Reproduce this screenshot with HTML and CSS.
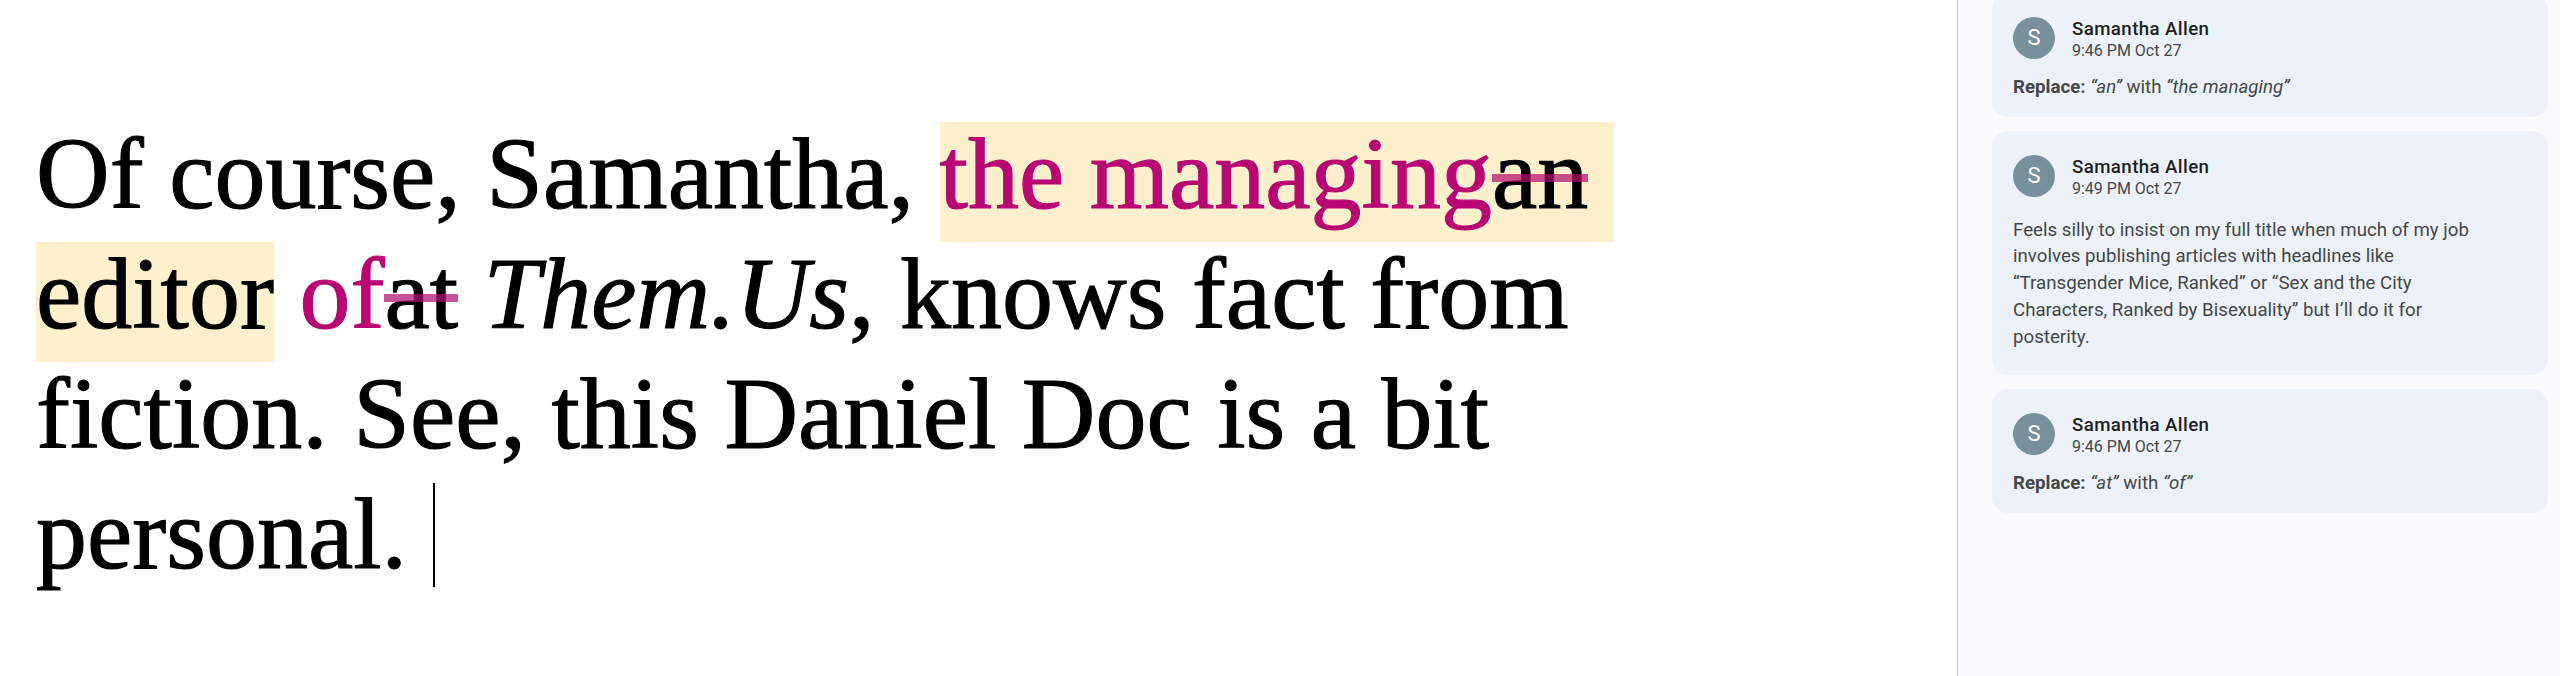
FILE: index.html
```html
<!DOCTYPE html>
<html lang="en">
<head>
<meta charset="utf-8">
<title>Doc with suggestions</title>
<link rel="stylesheet" href="styles.css">
</head>
<body>
<div class="app">
  <main class="doc">
    <p class="doc-text">Of course, Samantha, <span class="hl"><span class="ins">the managing</span><span class="del">an</span>&nbsp;</span><br><span class="hl">editor</span> <span class="ins">of</span><span class="del">at</span> <em>Them.Us</em>, knows fact from<br>fiction. See, this Daniel Doc is a bit<br>personal. <span class="caret"></span></p>
  </main>
  <aside class="sidebar">
    <div class="threads">
      <div class="card">
        <div class="card-head">
          <div class="avatar">S</div>
          <div class="who">
            <div class="name">Samantha Allen</div>
            <div class="time">9:46 PM Oct 27</div>
          </div>
        </div>
        <div class="replace"><b>Replace:</b> <i>“an”</i> with <i>“the managing”</i></div>
      </div>
      <div class="card">
        <div class="card-head">
          <div class="avatar">S</div>
          <div class="who">
            <div class="name">Samantha Allen</div>
            <div class="time">9:49 PM Oct 27</div>
          </div>
        </div>
        <div class="comment">Feels silly to insist on my full title when much of my job<br>involves publishing articles with headlines like<br>“Transgender Mice, Ranked” or “Sex and the City<br>Characters, Ranked by Bisexuality” but I’ll do it for<br>posterity.</div>
      </div>
      <div class="card">
        <div class="card-head">
          <div class="avatar">S</div>
          <div class="who">
            <div class="name">Samantha Allen</div>
            <div class="time">9:46 PM Oct 27</div>
          </div>
        </div>
        <div class="replace"><b>Replace:</b> <i>“at”</i> with <i>“of”</i></div>
      </div>
    </div>
  </aside>
</div>
</body>
</html>
```

FILE: styles.css
```css
* { box-sizing: border-box; }

html, body {
  margin: 0;
  padding: 0;
  background: #ffffff;
}

body {
  width: 2560px;
  height: 676px;
  overflow: hidden;
}

.app {
  display: flex;
  height: 676px;
}

.doc {
  flex: 1;
  background: #ffffff;
  padding: 114px 0 0 36px;
}

.doc-text {
  margin: 0;
  font-family: "Liberation Serif", "Times New Roman", serif;
  font-size: 102px;
  line-height: 120px;
  color: #000000;
  white-space: nowrap;
  -webkit-text-stroke: 1.1px currentColor;
}

.doc-text em {
  font-style: italic;
}

.hl {
  padding-bottom: 12px;
  background: linear-gradient(to bottom, transparent 0, transparent 5px, #fdf0cd 5px, #fdf0cd 100%);
}

.ins {
  color: #b80672;
}

.del {
  position: relative;
  color: #000000;
}

.del::after {
  content: "";
  position: absolute;
  left: 0;
  right: 0;
  top: 57px;
  height: 8px;
  background: rgba(176, 10, 108, 0.7);
}

.caret {
  display: inline-block;
  width: 0;
  height: 104px;
  border-left: 2px solid #000000;
  vertical-align: -19px;
}

.sidebar {
  width: 603px;
  flex: none;
  background: #f8fafd;
  border-left: 1px solid #c6c6c6;
  padding: 0 12px 0 34px;
  font-family: Roboto, "Noto Sans", sans-serif;
}

.threads {
  display: flex;
  flex-direction: column;
  gap: 14px;
  margin-top: -7px;
}

.card {
  background: #edf2fa;
  border-radius: 16px;
  padding: 24px 21px 16px 21px;
}

.card-head {
  display: flex;
  align-items: flex-start;
  gap: 17px;
}

.avatar {
  width: 42px;
  height: 42px;
  border-radius: 50%;
  background: #78909c;
  color: #ffffff;
  font-size: 22px;
  line-height: 42px;
  text-align: center;
  flex: none;
}

.who {
  display: flex;
  flex-direction: column;
}

.name {
  font-size: 18.7px;
  line-height: 24px;
  font-weight: 500;
  color: #1f1f1f;
  letter-spacing: 0.4px;
}

.time {
  font-size: 16px;
  line-height: 20px;
  color: #444746;
}

.replace {
  margin-top: 13px;
  font-size: 18.7px;
  line-height: 26.7px;
  color: #444746;
}

.replace b {
  font-weight: 700;
}

.replace i {
  font-style: italic;
}

.comment {
  margin-top: 18px;
  margin-bottom: 9px;
  font-size: 18.7px;
  line-height: 26.7px;
  color: #444746;
  white-space: nowrap;
}
```
